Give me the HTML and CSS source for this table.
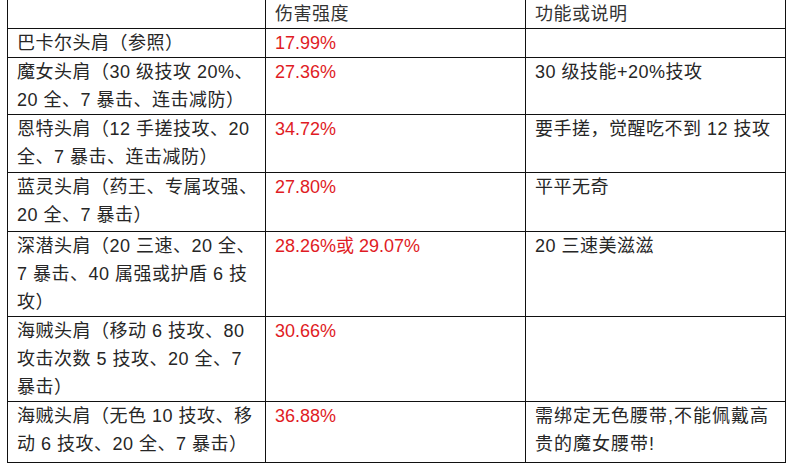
FILE: index.html
```html
<!DOCTYPE html>
<html lang="zh-CN">
<head>
<meta charset="utf-8">
<title>头肩对比</title>
<link rel="stylesheet" href="styles.css">
</head>
<body>
<table class="cmp">
  <colgroup>
    <col class="c1"><col class="c2"><col class="c3">
  </colgroup>
  <thead>
    <tr><th></th><th>伤害强度</th><th>功能或说明</th></tr>
  </thead>
  <tbody>
    <tr><td>巴卡尔头肩（参照）</td><td class="red">17.99%</td><td></td></tr>
    <tr><td>魔女头肩（30 级技攻 20%、<br>20 全、7 暴击、连击减防）</td><td class="red">27.36%</td><td>30 级技能+20%技攻</td></tr>
    <tr class="r4"><td>恩特头肩（12 手搓技攻、20<br>全、7 暴击、连击减防）</td><td class="red">34.72%</td><td>要手搓，觉醒吃不到 12 技攻</td></tr>
    <tr class="r5"><td>蓝灵头肩（药王、专属攻强、<br>20 全、7 暴击）</td><td class="red">27.80%</td><td>平平无奇</td></tr>
    <tr class="r6"><td>深潜头肩（20 三速、20 全、<br>7 暴击、40 属强或护盾 6 技<br>攻）</td><td class="red">28.26%或 29.07%</td><td>20 三速美滋滋</td></tr>
    <tr><td>海贼头肩（移动 6 技攻、80<br>攻击次数 5 技攻、20 全、7<br>暴击）</td><td class="red">30.66%</td><td></td></tr>
    <tr class="r8"><td>海贼头肩（无色 10 技攻、移<br>动 6 技攻、20 全、7 暴击）</td><td class="red">36.88%</td><td class="song">需绑定无色腰带,不能佩戴高<br>贵的魔女腰带!</td></tr>
  </tbody>
</table>
</body>
</html>
```
FILE: styles.css
```css
html, body {
  margin: 0;
  padding: 0;
  background: #ffffff;
}

body {
  width: 789px;
  height: 467px;
  overflow: hidden;
  font-family: "Liberation Sans", "Noto Sans CJK SC", sans-serif;
  font-size: 18px;
  color: #262626;
}

.cmp {
  margin-left: 7px;
  border-collapse: collapse;
  table-layout: fixed;
  width: 778px;
}

.c1 { width: 258px; }
.c2 { width: 260px; }
.c3 { width: 260px; }

.cmp th,
.cmp td {
  border: 1px solid #111111;
  padding: 0 6px 0 9px;
  line-height: 28px;
  vertical-align: top;
  text-align: left;
  font-weight: normal;
  white-space: nowrap;
  letter-spacing: 0.5px;
}

.cmp thead th {
  border-top: none;
  height: 28px;
  color: #333333;
}

.cmp tbody td {
  height: 28px;
}

.cmp .r4 td { height: 57px; }
.cmp .r5 td { height: 58px; }
.cmp .r8 td { height: 60px; }

.cmp td.red {
  color: #e01b24;
  letter-spacing: 0;
}

.cmp td.song {
  letter-spacing: 1px;
}
```
